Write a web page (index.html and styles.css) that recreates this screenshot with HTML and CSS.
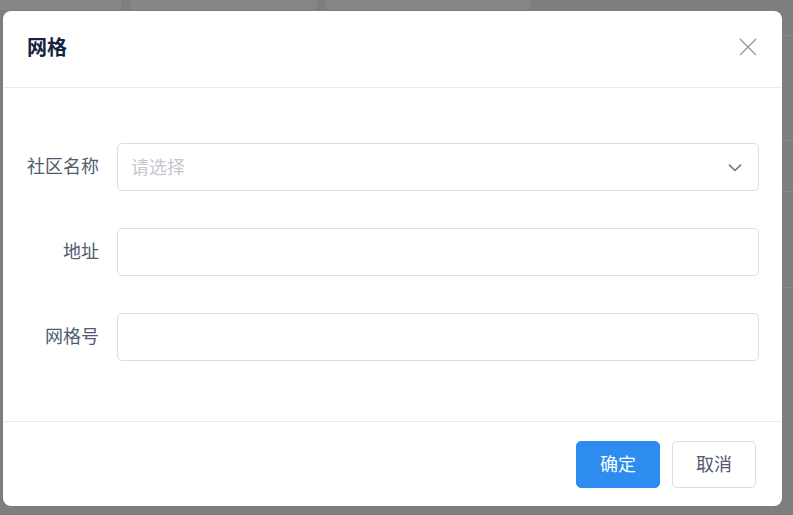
FILE: index.html
```html
<!DOCTYPE html>
<html lang="zh-CN">
<head>
<meta charset="utf-8">
<title>网格</title>
<link rel="stylesheet" href="styles.css">
</head>
<body>
<div class="page">
  <div class="topbar">
    <div class="card c1"></div>
    <div class="card c2"></div>
    <div class="card c3"></div>
  </div>
  <div class="side-left">
    <span class="line l1"></span>
    <span class="line l2"></span>
    <span class="line l3"></span>
    <span class="line l4"></span>
  </div>
  <div class="side-right">
    <span class="rline r1"></span>
    <span class="rline r2"></span>
    <span class="rline r3"></span>
    <span class="rline r4"></span>
  </div>
</div>

<div class="dialog">
  <div class="dialog-header">
    <div class="dialog-title">网格</div>
    <button class="close" aria-label="关闭">
      <svg width="18" height="18" viewBox="0 0 18 18"><path d="M1 1 L17 17 M17 1 L1 17" stroke="#999999" stroke-width="1.4" fill="none"/></svg>
    </button>
  </div>
  <div class="dialog-body">
    <div class="form-row">
      <label class="form-label">社区名称</label>
      <div class="field select">
        <span class="placeholder">请选择</span>
        <svg class="chevron" width="14" height="8" viewBox="0 0 14 8"><path d="M1.5 1.2 L7 6.5 L12.5 1.2" stroke="#6b7a93" stroke-width="1.7" fill="none" stroke-linecap="round" stroke-linejoin="round"/></svg>
      </div>
    </div>
    <div class="form-row">
      <label class="form-label">地址</label>
      <div class="field"></div>
    </div>
    <div class="form-row">
      <label class="form-label">网格号</label>
      <div class="field"></div>
    </div>
  </div>
  <div class="dialog-footer">
    <button class="btn primary">确定</button>
    <button class="btn default">取消</button>
  </div>
</div>
</body>
</html>
```

FILE: styles.css
```css
* { box-sizing: border-box; }
html, body { margin: 0; padding: 0; }
body {
  width: 793px;
  height: 515px;
  overflow: hidden;
  background: #7e7e7e;
  font-family: "Noto Sans CJK SC", "Noto Sans", sans-serif;
  position: relative;
}
.page { position: relative; width: 793px; height: 515px; }
.topbar {
  display: flex;
  gap: 8px;
  height: 10px;
}
.card {
  background: #868686;
  border-radius: 0 0 4px 4px;
  height: 10px;
}
.c1 { width: 121px; margin-left: 0; border-radius: 0 0 4px 0; }
.c2 { width: 187px; margin-left: 1px; }
.c3 { width: 206px; }
.side-left, .side-right { position: absolute; top: 0; height: 515px; }
.side-left { left: 0; width: 3px; }
.side-right { right: 0; width: 11px; top: 0; }
.line, .rline { position: absolute; left: 0; right: 0; height: 1px; background: #888888; }
.l1 { top: 118px; } .l2 { top: 141px; } .l3 { top: 200px; } .l4 { top: 278px; }
.r1 { top: 35px; } .r2 { top: 140px; } .r3 { top: 191px; } .r4 { top: 287px; }

.dialog {
  position: absolute;
  left: 3px;
  top: 11px;
  width: 779px;
  height: 495px;
  background: #ffffff;
  border-radius: 8px;
  display: flex;
  flex-direction: column;
}
.dialog-header {
  height: 77px;
  border-bottom: 1px solid #e8eaec;
  display: flex;
  align-items: center;
  justify-content: space-between;
  padding: 0 25px 4px 24px;
}
.dialog-title {
  font-size: 20px;
  font-weight: 700;
  color: #17233d;
  line-height: 28px;
  padding-bottom: 1px;
}
.close {
  border: 0;
  background: none;
  padding: 0;
  width: 18px;
  height: 18px;
  display: flex;
}
.dialog-body {
  height: 333px;
  padding: 55px 23px 0 24px;
  display: flex;
  flex-direction: column;
  gap: 37px;
}
.form-row {
  display: flex;
  align-items: center;
  height: 48px;
}
.form-label {
  width: 72px;
  margin-right: 18px;
  text-align: right;
  font-size: 18px;
  color: #515a6e;
  white-space: nowrap;
  line-height: 24px;
  padding-bottom: 4px;
}
.field {
  flex: 1;
  height: 48px;
  border: 1px solid #dcdee2;
  border-radius: 5px;
  display: flex;
  align-items: center;
  padding: 0 16px 0 13px;
}
.select { justify-content: space-between; }
.placeholder {
  font-size: 18px;
  color: #c5c8ce;
  line-height: 24px;
  padding-bottom: 3px;
}
.chevron { display: block; margin-top: 1px; }
.dialog-footer {
  flex: 1;
  border-top: 1px solid #e8eaec;
  display: flex;
  justify-content: flex-end;
  align-items: flex-start;
  gap: 12px;
  padding: 19px 26px 0 0;
}
.btn {
  width: 84px;
  height: 47px;
  border-radius: 5px;
  font-family: inherit;
  font-size: 18px;
  padding: 0 0 4px;
  cursor: pointer;
}
.primary {
  background: #2d8cf0;
  border: 1px solid #2d8cf0;
  color: #ffffff;
}
.default {
  background: #ffffff;
  border: 1px solid #dcdee2;
  color: #515a6e;
}
```
